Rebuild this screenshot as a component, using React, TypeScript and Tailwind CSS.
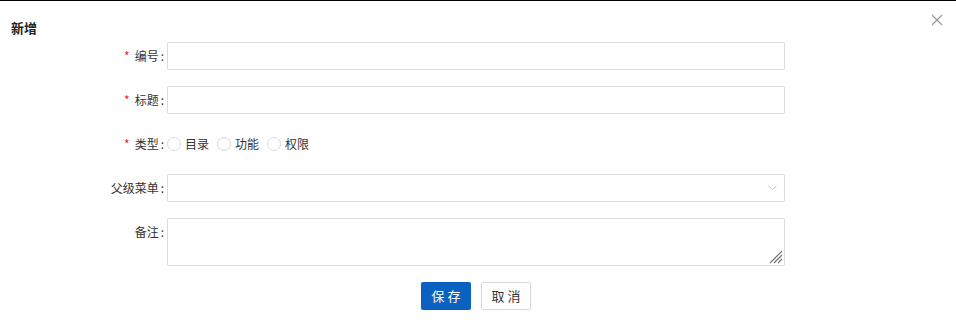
import React, { useState } from "react";

const font = { fontFamily: '"Noto Sans CJK SC", "Noto Sans", sans-serif' };

function Label({ text, required }: { text: string; required?: boolean }) {
  return (
    <div className="w-[167px] shrink-0 flex items-center justify-end pr-[3px] text-[12px] text-[#333]">
      {required && <span className="text-[#f5222d] mr-[5px] text-[12px]">*</span>}
      <span>{text}</span>
      <span className="ml-[2px]">:</span>
    </div>
  );
}

export default function App() {
  const [type, setType] = useState("");
  const types = ["目录", "功能", "权限"];

  return (
    <div className="w-[956px] h-[330px] bg-white border-t border-black relative" style={font}>
      <div className="h-[41px] pl-[11px] pt-[18px]">
        <h2 className="text-[13px] font-bold text-[#222] leading-[18px]">新增</h2>
      </div>
      <button type="button" className="absolute top-[13px] right-[13px] w-[12px] h-[12px] text-[#999]">
        <svg viewBox="0 0 12 12" width="12" height="12" stroke="currentColor" strokeWidth="1.3">
          <path d="M1 1L11 11M11 1L1 11" />
        </svg>
      </button>

      <div className="flex flex-col gap-[16px]">
        <div className="flex items-center h-[28px]">
          <Label text="编号" required />
          <input className="w-[618px] h-[28px] border border-[#dcdcdc] rounded-[2px] px-2 text-[12px] outline-none" />
        </div>
        <div className="flex items-center h-[28px]">
          <Label text="标题" required />
          <input className="w-[618px] h-[28px] border border-[#dcdcdc] rounded-[2px] px-2 text-[12px] outline-none" />
        </div>
        <div className="flex items-center h-[28px]">
          <Label text="类型" required />
          <div className="flex items-center gap-[8px]">
            {types.map((t) => (
              <label key={t} className="flex items-center gap-[4px] text-[12px] text-[#333] cursor-pointer">
                <span
                  onClick={() => setType(t)}
                  className={`w-[14px] h-[14px] rounded-full border ${type === t ? "border-[#0b61c0] border-[4px]" : "border-[#d9d9d9]"} bg-white`}
                />
                <span>{t}</span>
              </label>
            ))}
          </div>
        </div>
        <div className="flex items-center h-[28px]">
          <Label text="父级菜单" />
          <div className="w-[618px] h-[28px] border border-[#dcdcdc] rounded-[2px] flex items-center justify-end pr-[7px]">
            <svg viewBox="0 0 10 6" width="9" height="6" fill="none" stroke="#bbb" strokeWidth="1">
              <path d="M0.5 0.5L5 5L9.5 0.5" />
            </svg>
          </div>
        </div>
        <div className="flex items-start h-[48px]">
          <div className="h-[28px] flex items-center">
            <Label text="备注" />
          </div>
          <div className="relative w-[618px] h-[48px]">
            <textarea className="w-full h-full border border-[#dcdcdc] rounded-[2px] px-2 py-1 text-[12px] outline-none resize-none block" />
            <svg className="absolute right-[2px] bottom-[2px]" viewBox="0 0 14 14" width="14" height="14" stroke="#777" strokeWidth="1.2">
              <path d="M13 1L1 13M13 5L5 13M13 9L9 13" />
            </svg>
          </div>
        </div>
        <div className="flex pl-[167px]">
          <div className="w-[618px] flex justify-center gap-[10px]">
            <button type="button" className="w-[50px] h-[28px] rounded-[2px] bg-[#0b61c0] text-white text-[13px] tracking-[3px] pl-[3px]">
              保存
            </button>
            <button type="button" className="w-[50px] h-[28px] rounded-[2px] border border-[#d9d9d9] bg-white text-[#333] text-[13px] tracking-[3px] pl-[3px]">
              取消
            </button>
          </div>
        </div>
      </div>
    </div>
  );
}
